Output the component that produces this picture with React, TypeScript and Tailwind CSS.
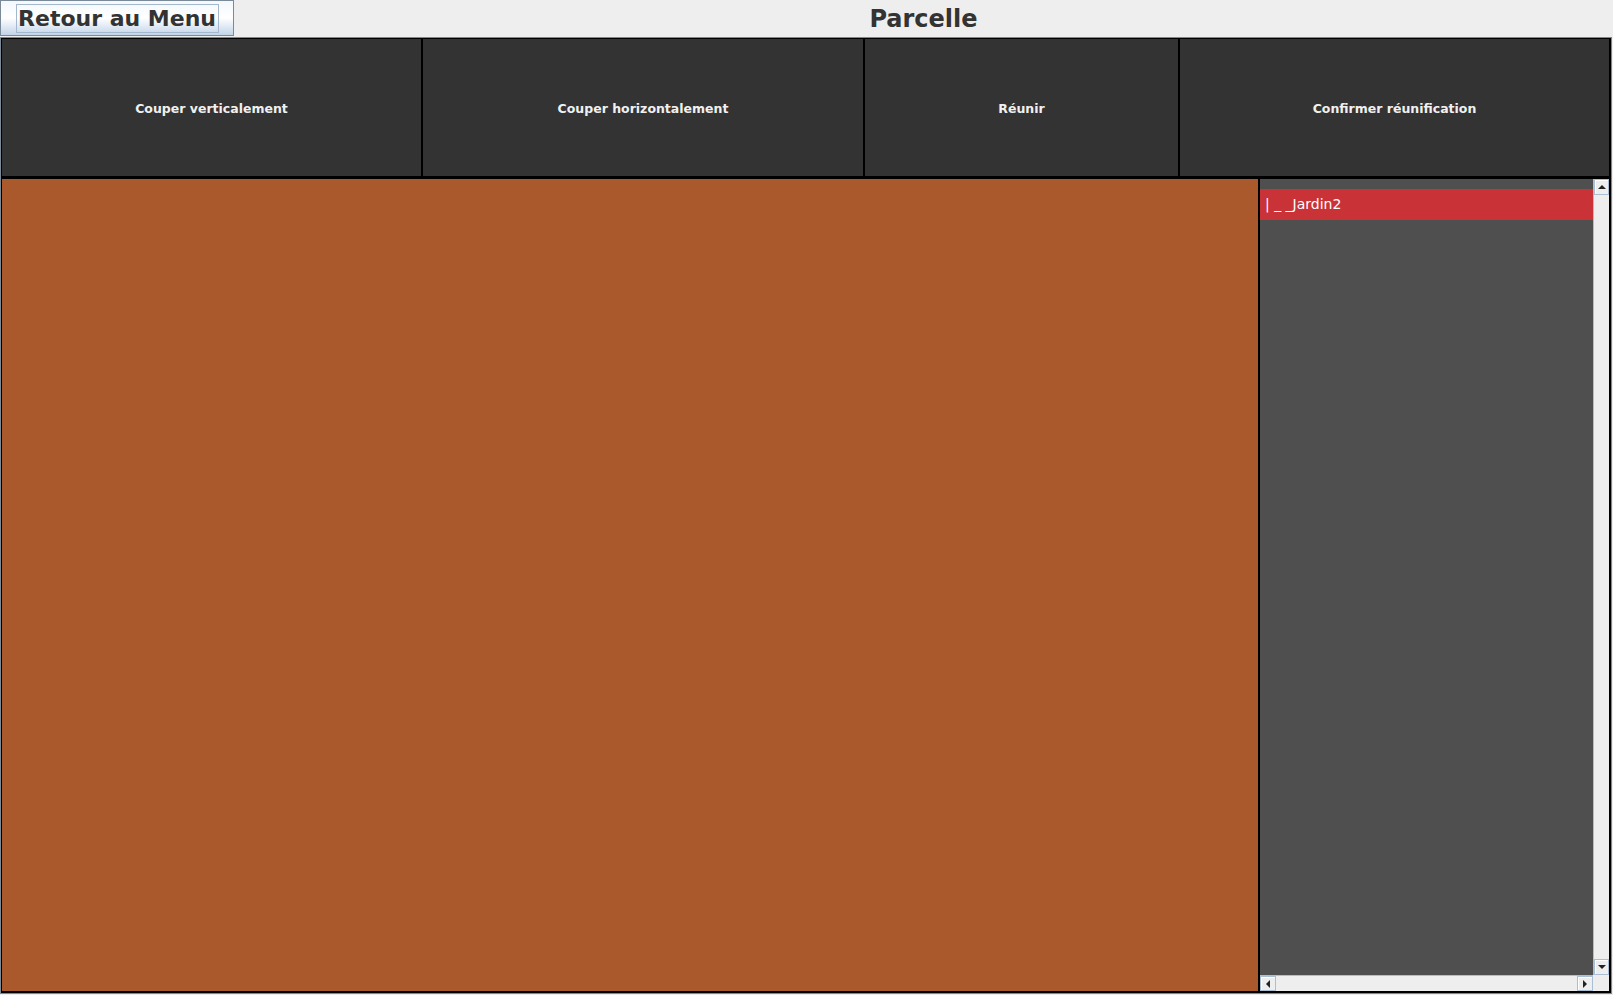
const actions = [
  { label: "Couper verticalement", width: "w-[421px]" },
  { label: "Couper horizontalement", width: "w-[442px]" },
  { label: "Réunir", width: "w-[315px]" },
  { label: "Confirmer réunification", width: "w-[431px]" },
];

function ArrowButton({ dir, className }: { dir: "up" | "down" | "left" | "right"; className: string }) {
  const points = {
    up: "4,1 0,5 8,5",
    down: "0,1 8,1 4,5",
    left: "1,4 5,0 5,8",
    right: "1,0 5,4 1,8",
  }[dir];
  const vertical = dir === "up" || dir === "down";
  return (
    <div className={`flex items-center justify-center border border-[#a9bfd6] bg-[#eeeeee] shadow-[inset_1px_1px_0_#ffffff] ${className}`}>
      <svg width={vertical ? 8 : 6} height={vertical ? 6 : 8} viewBox={vertical ? "0 0 8 6" : "0 0 6 8"}>
        <polygon points={points} fill="#222" />
      </svg>
    </div>
  );
}

export default function App() {
  return (
    <div className="flex h-[995px] w-[1613px] flex-col bg-[#eeeeee] font-['DejaVu_Sans',sans-serif]">
      <div className="flex h-[37px] shrink-0">
        <button className="flex h-[36px] w-[234px] items-center justify-center border border-[#7a8a99] bg-gradient-to-b from-[#f4f8fc] via-[#ffffff] to-[#c2d4e8] p-0">
          <span className="flex h-[29px] w-[203px] items-center justify-center border border-[#a3b8cc] pt-[2px] text-[22px] font-bold leading-none text-[#333333]">
            Retour au Menu
          </span>
        </button>
        <div className="flex flex-1 items-center justify-center pt-[1px] text-[24px] font-bold text-[#333333]">Parcelle</div>
      </div>

      <div className="flex h-[957px] w-[1612px] flex-col border border-[#7a8a99]">
        <div className="flex flex-1 flex-col border-l border-t border-black">
          <div className="flex h-[140px] shrink-0 border-b-[3px] border-black">
            {actions.map((a) => (
              <button
                key={a.label}
                className={`${a.width} flex items-center justify-center border-r-2 border-black bg-[#333333] pt-[4px] text-[12.5px] font-bold text-[#f0f0f0]`}
              >
                {a.label}
              </button>
            ))}
          </div>

          <div className="flex flex-1 border-b-2 border-black">
            <div className="w-[1258px] border-r-2 border-black bg-[#aa592d]" />
            <div className="flex w-[351px] flex-col border-r-2 border-black">
              <div className="flex flex-1">
                <div className="flex-1 bg-[#4f4f4f] pt-[10px]">
                  <div className="flex h-[31px] items-center bg-[#c93236] pl-[5px] text-[14px] text-white whitespace-pre">
                    {"| _ _Jardin2"}
                  </div>
                </div>
                <div className="flex w-[16px] flex-col border-l border-[#a9bfd6] bg-[#eeeeee]">
                  <ArrowButton dir="up" className="h-[16px] w-full" />
                  <div className="flex-1" />
                  <ArrowButton dir="down" className="h-[16px] w-full" />
                </div>
              </div>
              <div className="flex h-[16px] shrink-0">
                <div className="flex flex-1 border-t border-[#a9bfd6] bg-[#eeeeee]">
                  <ArrowButton dir="left" className="h-full w-[16px]" />
                  <div className="flex-1" />
                  <ArrowButton dir="right" className="h-full w-[16px]" />
                </div>
                <div className="w-[16px] bg-[#eeeeee]" />
              </div>
            </div>
          </div>
        </div>
      </div>
    </div>
  );
}
